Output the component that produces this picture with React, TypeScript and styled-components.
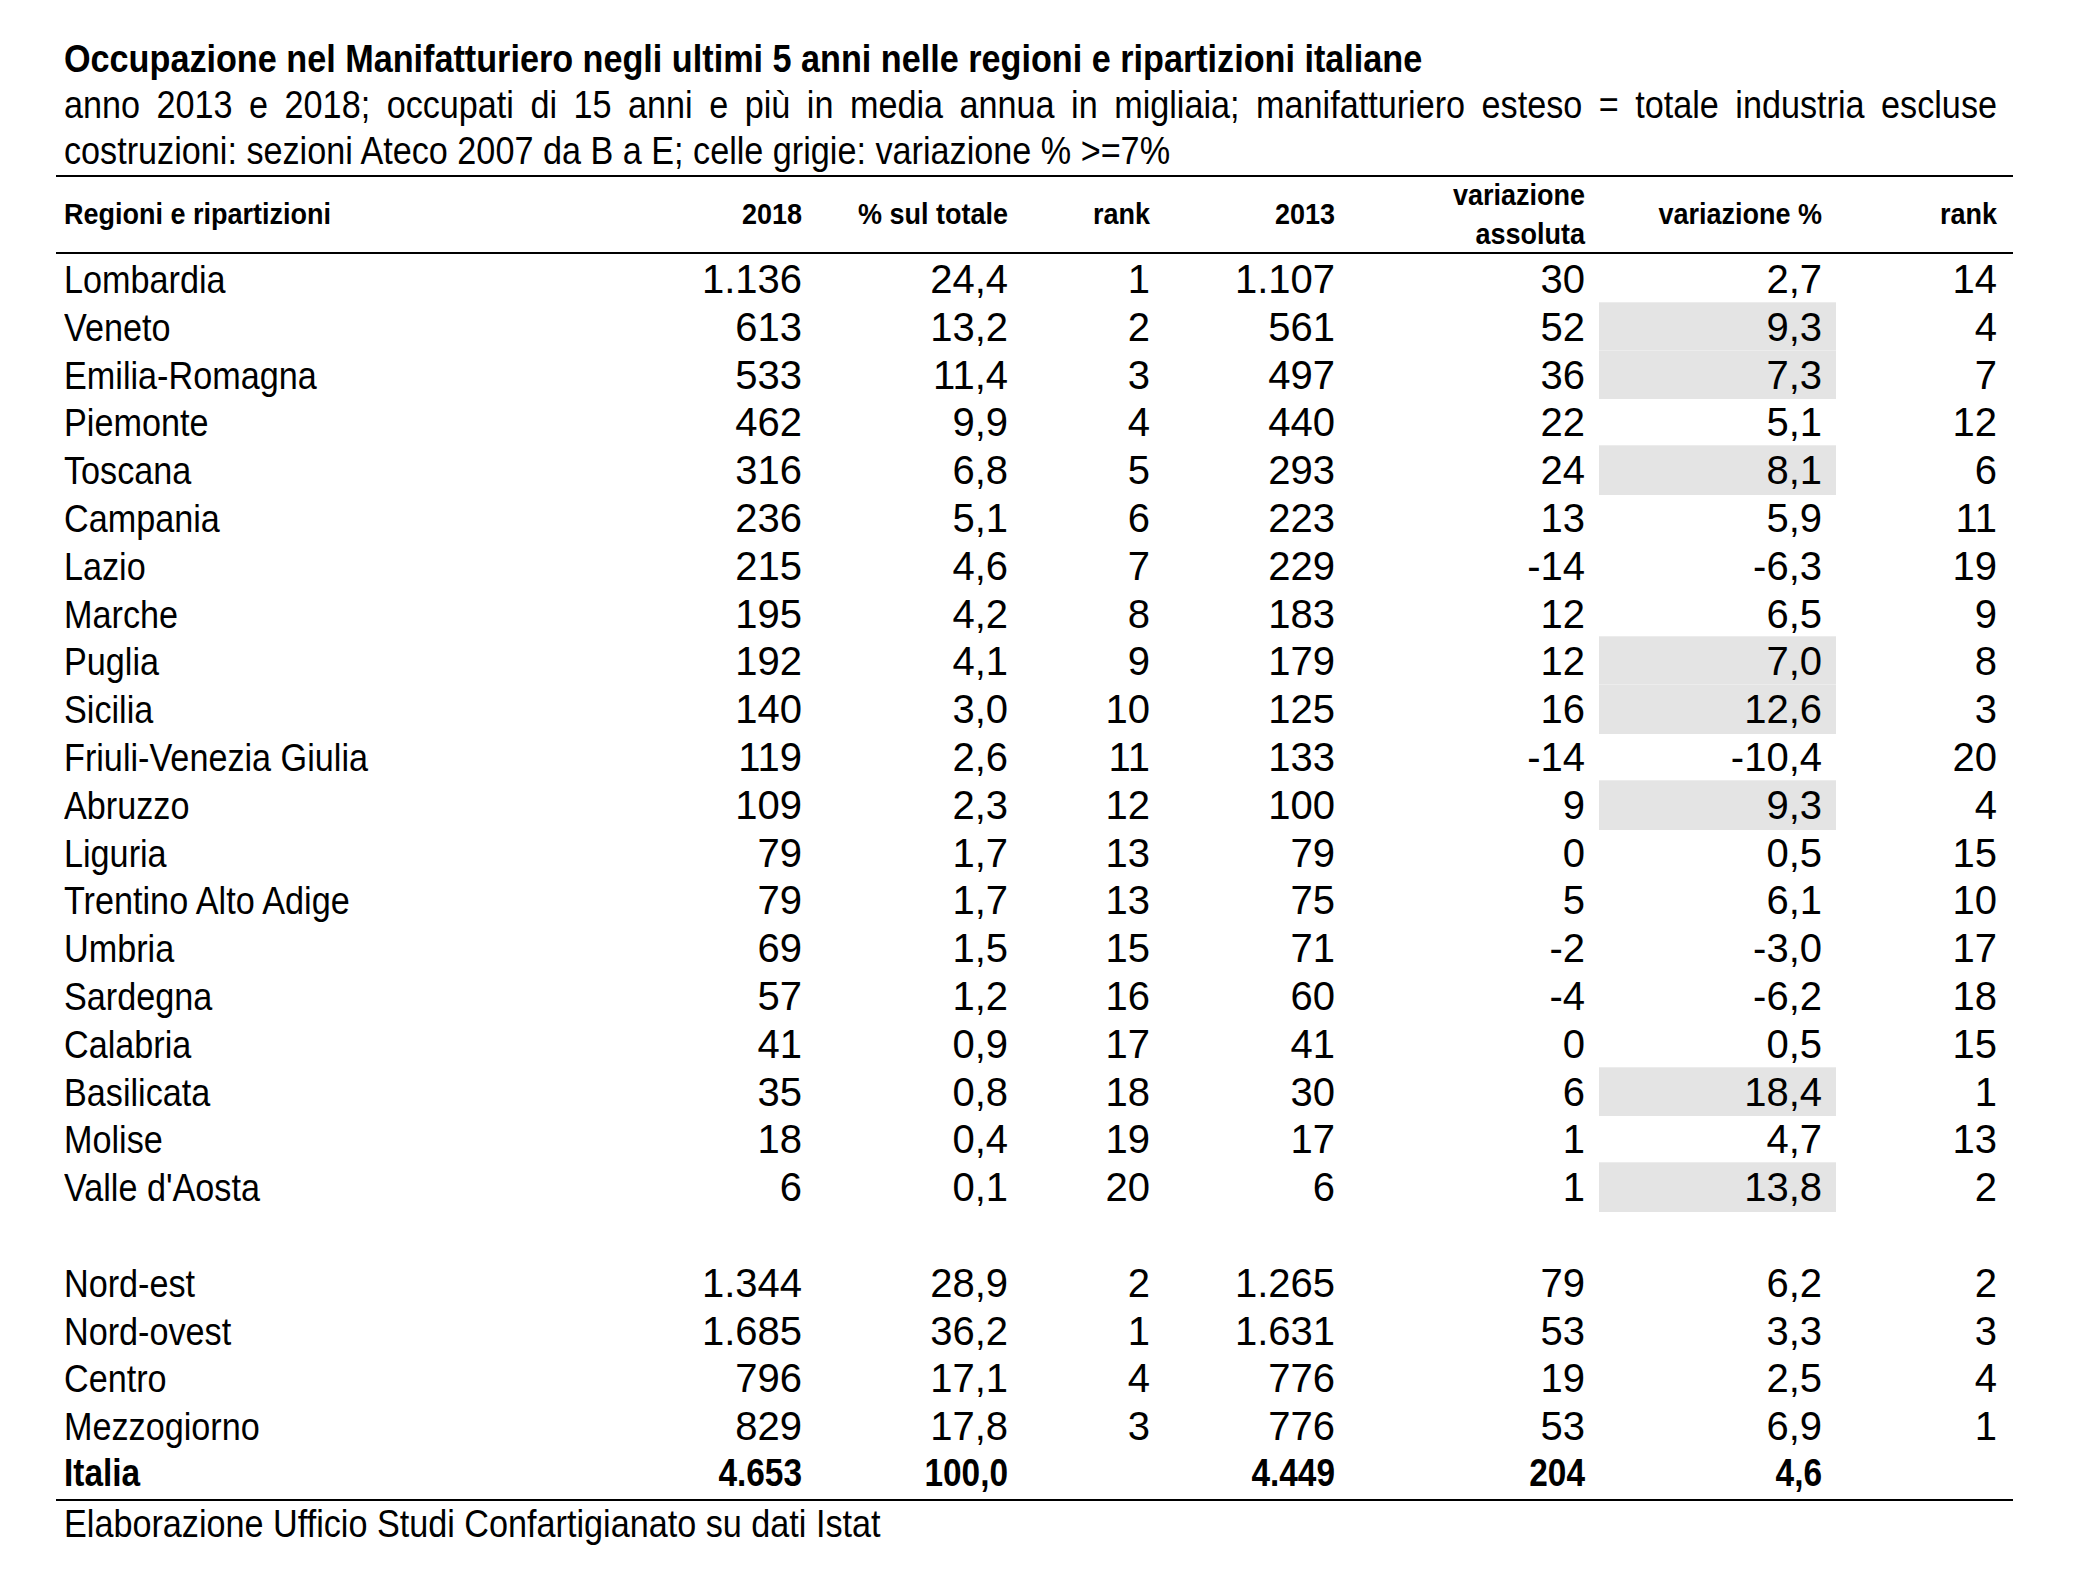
import React from "react";
import styled, { createGlobalStyle } from "styled-components";

const Global = createGlobalStyle`
  html, body { margin: 0; padding: 0; background: #ffffff; }
  body { font-family: "Liberation Sans", Arial, Helvetica, sans-serif; color: #000; }
`;

/* The reference uses a narrow Arial; Liberation Sans is sized to the same
   text widths and stretched vertically to the same glyph height. */
const STRETCH = 1.14;
const ROW_H = 47.8;

const Page = styled.div`
  width: 1957px;
  margin-left: 56px;
  padding-top: 37px;
`;

const Title = styled.div`
  font-weight: 700;
  font-size: 34.2px;
  line-height: 46px;
  padding: 0 16px 0 8px;
  white-space: nowrap;
  transform: scaleY(${STRETCH});
  transform-origin: 50% 34.85px;
`;

const SubLine = styled.div<{ $justify?: boolean }>`
  font-size: 34.2px;
  line-height: 46px;
  padding: 0 16px 0 8px;
  white-space: nowrap;
  text-align: ${(p) => (p.$justify ? "justify" : "left")};
  text-align-last: ${(p) => (p.$justify ? "justify" : "left")};
  transform: scaleY(${STRETCH});
  transform-origin: 50% 34.85px;
`;

const COLS = "610px 150px 206px 142px 185px 250px 237px 177px";

const Table = styled.div`
  border-top: 2px solid #000;
  border-bottom: 2px solid #000;
`;

const HeadRow = styled.div`
  display: grid;
  grid-template-columns: ${COLS};
  height: 75px;
  border-bottom: 2px solid #000;
  align-items: center;
`;

const HeadCell = styled.div<{ $left?: boolean; $last?: boolean }>`
  font-weight: 700;
  font-size: 27px;
  line-height: 35px;
  white-space: nowrap;
  text-align: ${(p) => (p.$left ? "left" : "right")};
  padding: ${(p) => (p.$left ? "0 0 0 8px" : p.$last ? "0 16px 0 0" : "0 14px 0 0")};
  transform: scaleY(1.12);
`;

const Row = styled.div<{ $bold?: boolean }>`
  display: grid;
  grid-template-columns: ${COLS};
  height: ${(p) => (p.$bold ? 50.5 : ROW_H)}px;
  font-size: ${(p) => (p.$bold ? "33.4px" : "40px")};
  line-height: ${ROW_H}px;
  font-weight: ${(p) => (p.$bold ? 700 : 400)};
`;

const Cell = styled.div<{ $left?: boolean; $last?: boolean; $grey?: boolean }>`
  text-align: ${(p) => (p.$left ? "left" : "right")};
  padding: ${(p) => (p.$left ? "2px 0 0 8px" : p.$last ? "2px 16px 0 0" : "2px 14px 0 0")};
  background: ${(p) => (p.$grey ? "#e4e4e4" : "transparent")};
  box-shadow: ${(p) => (p.$grey ? "inset 0 1px 0 #ececec" : "none")};
  white-space: nowrap;
`;

const Tall = styled.span<{ $size: number }>`
  display: inline-block;
  font-size: ${(p) => p.$size}px;
  line-height: 1;
  transform: scaleY(${STRETCH});
  transform-origin: 50% 85%;
`;

const Footer = styled.div`
  font-size: 34.2px;
  line-height: 48px;
  padding-left: 8px;
  white-space: nowrap;
  transform: scaleY(${STRETCH});
  transform-origin: 50% 35.85px;
`;

type R = [string, string, string, string, string, string, string, string, boolean?];

const regions: R[] = [
  ["Lombardia", "1.136", "24,4", "1", "1.107", "30", "2,7", "14"],
  ["Veneto", "613", "13,2", "2", "561", "52", "9,3", "4", true],
  ["Emilia-Romagna", "533", "11,4", "3", "497", "36", "7,3", "7", true],
  ["Piemonte", "462", "9,9", "4", "440", "22", "5,1", "12"],
  ["Toscana", "316", "6,8", "5", "293", "24", "8,1", "6", true],
  ["Campania", "236", "5,1", "6", "223", "13", "5,9", "11"],
  ["Lazio", "215", "4,6", "7", "229", "-14", "-6,3", "19"],
  ["Marche", "195", "4,2", "8", "183", "12", "6,5", "9"],
  ["Puglia", "192", "4,1", "9", "179", "12", "7,0", "8", true],
  ["Sicilia", "140", "3,0", "10", "125", "16", "12,6", "3", true],
  ["Friuli-Venezia Giulia", "119", "2,6", "11", "133", "-14", "-10,4", "20"],
  ["Abruzzo", "109", "2,3", "12", "100", "9", "9,3", "4", true],
  ["Liguria", "79", "1,7", "13", "79", "0", "0,5", "15"],
  ["Trentino Alto Adige", "79", "1,7", "13", "75", "5", "6,1", "10"],
  ["Umbria", "69", "1,5", "15", "71", "-2", "-3,0", "17"],
  ["Sardegna", "57", "1,2", "16", "60", "-4", "-6,2", "18"],
  ["Calabria", "41", "0,9", "17", "41", "0", "0,5", "15"],
  ["Basilicata", "35", "0,8", "18", "30", "6", "18,4", "1", true],
  ["Molise", "18", "0,4", "19", "17", "1", "4,7", "13"],
  ["Valle d'Aosta", "6", "0,1", "20", "6", "1", "13,8", "2", true],
];

const areas: R[] = [
  ["Nord-est", "1.344", "28,9", "2", "1.265", "79", "6,2", "2"],
  ["Nord-ovest", "1.685", "36,2", "1", "1.631", "53", "3,3", "3"],
  ["Centro", "796", "17,1", "4", "776", "19", "2,5", "4"],
  ["Mezzogiorno", "829", "17,8", "3", "776", "53", "6,9", "1"],
];

const total: R = ["Italia", "4.653", "100,0", "", "4.449", "204", "4,6", ""];

function DataRow({ r, bold }: { r: R; bold?: boolean }) {
  const num = (v: string) => (bold ? <Tall $size={33.4}>{v}</Tall> : v);
  return (
    <Row $bold={bold}>
      <Cell $left>
        <Tall $size={bold ? 33.4 : 34.2}>{r[0]}</Tall>
      </Cell>
      <Cell>{num(r[1])}</Cell>
      <Cell>{num(r[2])}</Cell>
      <Cell>{num(r[3])}</Cell>
      <Cell>{num(r[4])}</Cell>
      <Cell>{num(r[5])}</Cell>
      <Cell $grey={!!r[8]}>{num(r[6])}</Cell>
      <Cell $last>{num(r[7])}</Cell>
    </Row>
  );
}

export default function App() {
  return (
    <>
      <Global />
      <Page>
        <Title>Occupazione nel Manifatturiero negli ultimi 5 anni nelle regioni e ripartizioni italiane</Title>
        <SubLine $justify>
          anno 2013 e 2018; occupati di 15 anni e più in media annua in migliaia; manifatturiero esteso = totale industria escluse
        </SubLine>
        <SubLine>costruzioni: sezioni Ateco 2007 da B a E; celle grigie: variazione % &gt;=7%</SubLine>
        <Table>
          <HeadRow>
            <HeadCell $left>Regioni e ripartizioni</HeadCell>
            <HeadCell>2018</HeadCell>
            <HeadCell>% sul totale</HeadCell>
            <HeadCell>rank</HeadCell>
            <HeadCell>2013</HeadCell>
            <HeadCell>
              variazione
              <br />
              assoluta
            </HeadCell>
            <HeadCell>variazione %</HeadCell>
            <HeadCell $last>rank</HeadCell>
          </HeadRow>
          {regions.map((r) => (
            <DataRow key={r[0]} r={r} />
          ))}
          <Row />
          {areas.map((r) => (
            <DataRow key={r[0]} r={r} />
          ))}
          <DataRow r={total} bold />
        </Table>
        <Footer>Elaborazione Ufficio Studi Confartigianato su dati Istat</Footer>
      </Page>
    </>
  );
}
